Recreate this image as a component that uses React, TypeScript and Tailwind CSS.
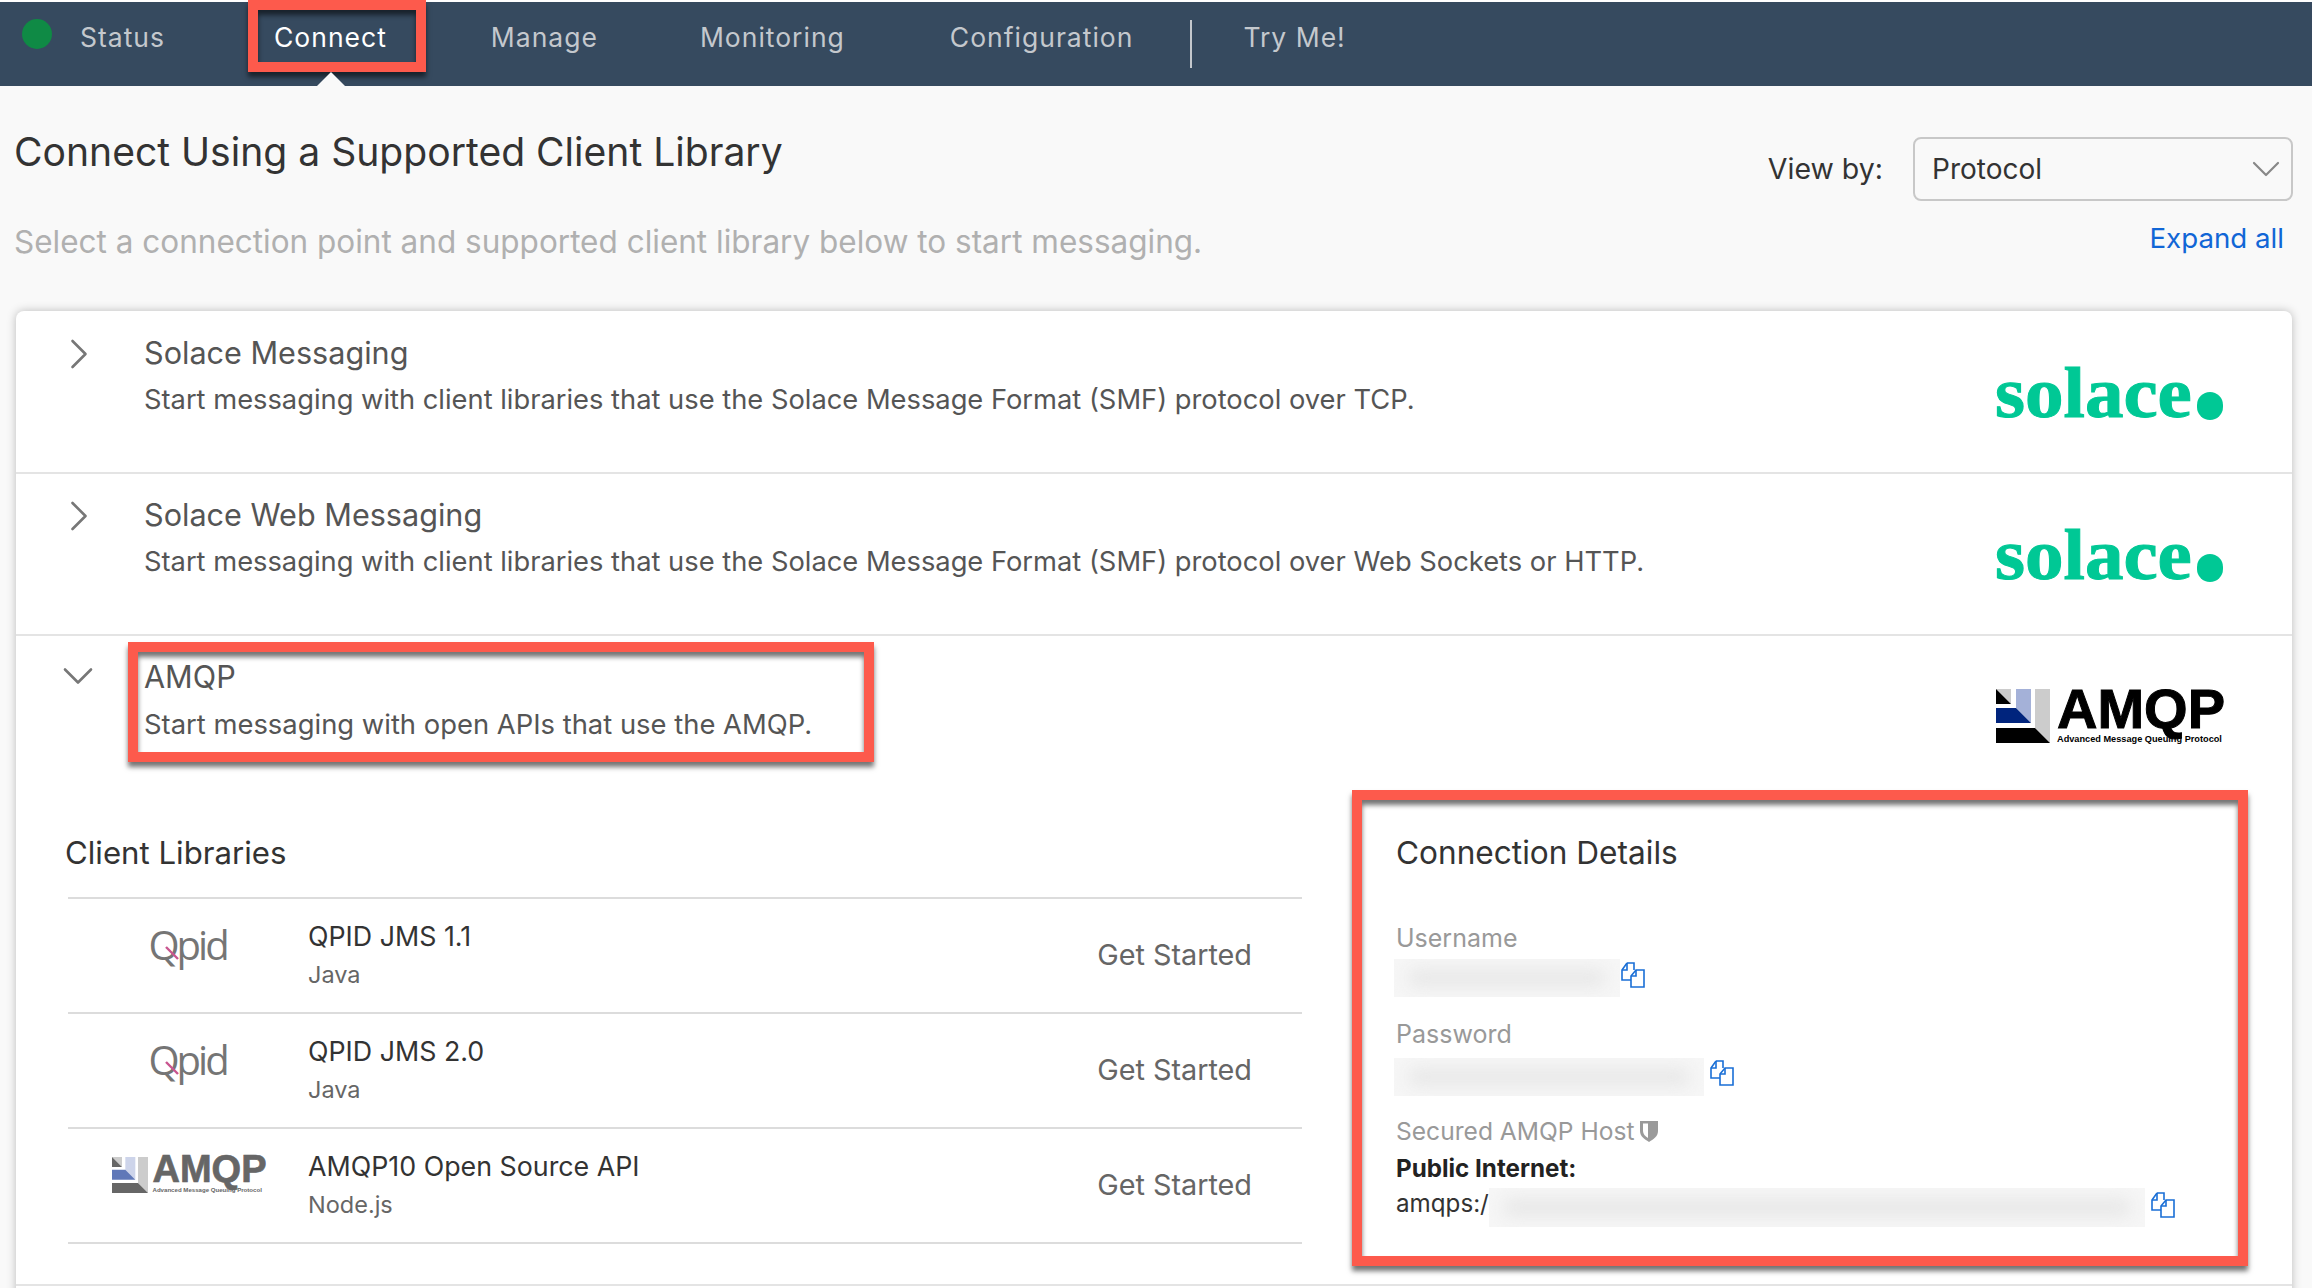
import {ChevronDown, ChevronRight} from "lucide-react";

const navItems = [
    {label: "Manage", ml: "ml-[104px]"},
    {label: "Monitoring", ml: "ml-[102px]"},
    {label: "Configuration", ml: "ml-[105px]"},
];

const libraries = [
    {title: "QPID JMS 1.1", sub: "Java", logo: "qpid"},
    {title: "QPID JMS 2.0", sub: "Java", logo: "qpid"},
    {title: "AMQP10 Open Source API", sub: "Node.js", logo: "amqp"},
];

function RedBox({className}: {className: string}) {
    return (
        <div
            className={"absolute border-[10px] border-[#fd5a4c] shadow-[0_5px_5px_rgba(0,0,0,0.55),inset_0_5px_5px_rgba(0,0,0,0.55)] " + className}/>
    );
}

function SolaceLogo() {
    return (
        <div className="flex h-[56px] w-[228px] items-start">
            <span
                className="mt-[1px] w-[199px] origin-left scale-x-[1.07] font-['Liberation_Serif',serif] text-[72px] font-bold leading-[56px] text-[#00c895] [-webkit-text-stroke:1px_#00c895]">solace</span>
            <div className="mt-[28px] ml-[3px] h-[28px] w-[26px] shrink-0 rounded-full bg-[#00c895]"/>
        </div>
    );
}

function AmqpMark({size, muted}: { size: number, muted?: boolean }) {
    return (
        <svg width={size} height={size} viewBox="0 0 54 54" className="shrink-0">
            <path d="M0 0H15V15Z" fill="#cccccc"/>
            <path d="M0 0L15 15H0Z" fill={muted ? "#666666" : "#000000"}/>
            <path d="M20 0H35V34L20 19Z" fill={muted ? "#cdd4ea" : "#a4b1d8"}/>
            <path d="M0 19H20L35 34H0Z" fill={muted ? "#6078b8" : "#00247d"}/>
            <path d="M39 0H54V54L39 39Z" fill="#cccccc"/>
            <path d="M0 39H39L54 54H0Z" fill={muted ? "#666666" : "#000000"}/>
        </svg>
    );
}

function AmqpLogo() {
    return (
        <div className="flex h-[54px] w-[229px] items-start">
            <AmqpMark size={54}/>
            <div className="ml-[7px] flex flex-col font-['Liberation_Sans',sans-serif] font-bold text-black">
                <span className="h-[45px] text-[56px] leading-[40px] [-webkit-text-stroke:1px_#000000]">AMQP</span>
                <span className="whitespace-nowrap text-[9.2px] leading-[10px]">Advanced Message Queuing Protocol</span>
            </div>
        </div>
    );
}

function SmallAmqpLogo() {
    return (
        <div className="ml-[6px] flex items-start">
            <AmqpMark size={36} muted/>
            <div className="ml-[5px] flex flex-col font-['Liberation_Sans',sans-serif] font-bold text-[#666666]">
                <span className="h-[30px] text-[38px] leading-[25px] [-webkit-text-stroke:0.7px_#666666]">AMQP</span>
                <span className="whitespace-nowrap text-[6.1px] leading-[6px]">Advanced Message Queuing Protocol</span>
            </div>
        </div>
    );
}

function QpidLogo() {
    return (
        <div className="relative ml-[3px] h-[40px] w-[78px]">
            <span
                className="font-['Open_Sans',sans-serif] text-[40px] font-normal leading-[36px] tracking-[-3px] text-[#757575]">Qpid</span>
            <svg width="16" height="16" viewBox="0 0 16 16" className="absolute left-[15px] top-[18px]">
                <path d="M2 2L14 14" stroke="#c9558f" strokeWidth="2.4"/>
            </svg>
        </div>
    );
}

function CopyIcon() {
    return (
        <svg width="24" height="26" viewBox="0 0 24 26" fill="none" stroke="#1a6fd6" strokeWidth="1.6"
             className="shrink-0">
            <path d="M6 1H13V8M6 1L1 8V18H10"/>
            <path d="M1 8H6V1"/>
            <path d="M15 8H23V25H10V14Z" fill="#ffffff"/>
            <path d="M10 14H15V8"/>
        </svg>
    );
}

function ShieldIcon() {
    return (
        <svg width="18" height="22" viewBox="0 0 18 22" className="shrink-0">
            <path d="M0 1H18V11C18 16 14 19 9 22C4 19 0 16 0 11Z" fill="#9a9a9a"/>
            <path d="M3 3.5H8V18C5 16 3 14 3 11Z" fill="#ffffff"/>
        </svg>
    );
}

function Blurred({className}: {className: string}) {
    return (
        <div className={"relative shrink-0 overflow-hidden bg-[#f6f6f6] " + className}>
            <div className="absolute inset-x-[14px] inset-y-[10px] rounded-full bg-[#e8e8e8] blur-[8px]"/>
        </div>
    );
}

function Row({title, desc, height, iconPad, textPad, logoPad}: {
    title: string, desc: string, height: string, iconPad: string, textPad: string, logoPad: string
}) {
    return (
        <div className={"flex border-b-2 border-[#e4e4e4] " + height}>
            <div className={"w-[128px] pl-[37px] " + iconPad}>
                <ChevronRight size={52} strokeWidth={1.2} className="text-[#777777]"/>
            </div>
            <div className={"flex-1 text-[#555555] " + textPad}>
                <div className="text-[30.6px] leading-[40px]">{title}</div>
                <div className="mt-[7px] text-[27.3px] leading-[40px]">{desc}</div>
            </div>
            <div className={"pr-[69px] " + logoPad}>
                <SolaceLogo/>
            </div>
        </div>
    );
}

export default function App() {
    return (
        <div className="relative h-[1288px] w-[2312px] overflow-hidden bg-[#f9f9f9] font-['Inter',sans-serif]">
            <div className="h-[2px] bg-white"/>
            <div className="flex h-[84px] items-center bg-[#364a5f] pb-[12px] text-[26.5px] tracking-[1px] text-[#c4c8cd]">
                <div className="ml-[22px] h-[30px] w-[30px] -translate-y-[4px] rounded-full bg-[#0f8a45]"/>
                <span className="ml-[28px]">Status</span>
                <span className="ml-[109px] text-white">Connect</span>
                {navItems.map((item) => (
                    <span key={item.label} className={item.ml}>{item.label}</span>
                ))}
                <div className="ml-[57px] h-[48px] w-[2px] translate-y-[6px] bg-[#c4c8cd]"/>
                <span className="ml-[51px]">Try Me!</span>
            </div>

            <div className="flex h-[225px] justify-between">
                <div className="pl-[14px] pt-[46px]">
                    <h1 className="text-[39.1px] font-normal leading-[40px] text-[#333333]">Connect Using a Supported Client Library</h1>
                    <p className="mt-[50px] text-[31.5px] leading-[40px] text-[#b0b0b0]">Select a connection point and supported client library below to start messaging.</p>
                </div>
                <div className="flex flex-col items-end pr-[19px] pt-[51px]">
                    <div className="flex items-center">
                        <span className="text-[28.5px] text-[#333333]">View by:</span>
                        <div
                            className="ml-[30px] flex h-[64px] w-[380px] items-center justify-between rounded-[8px] border-2 border-[#c8c8c8] pl-[17px] pr-[1px] text-[28px] text-[#333333]">
                            <span>Protocol</span>
                            <ChevronDown size={48} strokeWidth={1.1} className="text-[#888888]"/>
                        </div>
                    </div>
                    <a href="#" className="mr-[9px] mt-[17px] text-[27.7px] leading-[40px] text-[#1166d6]">Expand all</a>
                </div>
            </div>

            <div
                className="ml-[16px] h-[1100px] w-[2276px] rounded-t-[8px] bg-white shadow-[0_0_10px_rgba(0,0,0,0.25)]">
                <Row title="Solace Messaging" height="h-[163px]" iconPad="pt-[17px]" textPad="pt-[22px]" logoPad="pt-[53px]"
                     desc="Start messaging with client libraries that use the Solace Message Format (SMF) protocol over TCP."/>
                <Row title="Solace Web Messaging" height="h-[162px]" iconPad="pt-[16px]" textPad="pt-[21px]" logoPad="pt-[52px]"
                     desc="Start messaging with client libraries that use the Solace Message Format (SMF) protocol over Web Sockets or HTTP."/>

                <div className="h-[650px] border-b-2 border-[#e4e4e4]">
                    <div className="flex h-[162px]">
                        <div className="w-[128px] pl-[36px] pt-[14px]">
                            <ChevronDown size={52} strokeWidth={1.2} className="text-[#777777]"/>
                        </div>
                        <div className="flex-1 pt-[21px] text-[#555555]">
                            <div className="text-[30.6px] leading-[40px]">AMQP</div>
                            <div className="mt-[7px] text-[27.4px] leading-[40px]">Start messaging with open APIs that use the AMQP.</div>
                        </div>
                        <div className="pr-[67px] pt-[53px]">
                            <AmqpLogo/>
                        </div>
                    </div>

                    <div className="flex pl-[52px]">
                        <div className="w-[1234px]">
                            <div className="h-[101px] border-b-2 border-[#dcdcdc] pt-[35px]">
                                <h2 className="-ml-[3px] text-[31.2px] font-normal leading-[40px] text-[#333333]">Client Libraries</h2>
                            </div>
                            {libraries.map((lib) => (
                                <div key={lib.title} className="flex h-[115px] border-b-2 border-[#dcdcdc]">
                                    <div className="flex w-[240px] items-start justify-center pt-[28px] pr-[4px]">
                                        {lib.logo === "qpid" ? <QpidLogo/> : <SmallAmqpLogo/>}
                                    </div>
                                    <div className="flex-1 pt-[20px]">
                                        <div className="text-[26.8px] leading-[34px] text-[#333333]">{lib.title}</div>
                                        <div className="mt-[7px] text-[23.5px] leading-[30px] text-[#666666]">{lib.sub}</div>
                                    </div>
                                    <div className="flex items-center pb-[2px] pr-[50px] text-[28.8px] text-[#666666]">Get Started</div>
                                </div>
                            ))}
                        </div>

                        <div className="ml-[94px] flex-1 pt-[35px]">
                            <h2 className="text-[31.6px] font-normal leading-[40px] text-[#333333]">Connection Details</h2>
                            <div className="mt-[48px] text-[25px] leading-[34px] text-[#999999]">Username</div>
                            <div className="mt-[4px] flex items-start">
                                <Blurred className="-ml-[2px] h-[38px] w-[226px]"/>
                                <div className="ml-[1px] mt-[3px]"><CopyIcon/></div>
                            </div>
                            <div className="mt-[20px] text-[25px] leading-[34px] text-[#999999]">Password</div>
                            <div className="mt-[7px] flex items-start">
                                <Blurred className="-ml-[2px] h-[38px] w-[310px]"/>
                                <div className="ml-[6px] mt-[2px]"><CopyIcon/></div>
                            </div>
                            <div className="mt-[18px] flex items-center text-[24.6px] leading-[34px] text-[#999999]">
                                <span>Secured AMQP Host</span>
                                <div className="ml-[5px]"><ShieldIcon/></div>
                            </div>
                            <div className="mt-[4px] text-[24.2px] font-bold leading-[34px] text-[#222222]">Public Internet:</div>
                            <div className="mt-[2px] flex items-start">
                                <span className="w-[93px] whitespace-nowrap text-[24.2px] leading-[32px] text-[#333333]">amqps://</span>
                                <Blurred className="h-[39px] w-[656px]"/>
                                <div className="ml-[6px] mt-[4px]"><CopyIcon/></div>
                            </div>
                        </div>
                    </div>
                </div>
            </div>

            {/* annotations drawn over the screenshot */}
            <RedBox className="left-[248px] top-0 h-[72px] w-[178px]"/>
            <div className="absolute left-[317px] top-[72px] h-[14px] w-[28px] bg-[#f9f9f9] [clip-path:polygon(50%_0,100%_100%,0_100%)]"/>
            <RedBox className="left-[128px] top-[642px] h-[120px] w-[746px]"/>
            <RedBox className="left-[1352px] top-[790px] h-[476px] w-[896px]"/>
        </div>
    );
}
